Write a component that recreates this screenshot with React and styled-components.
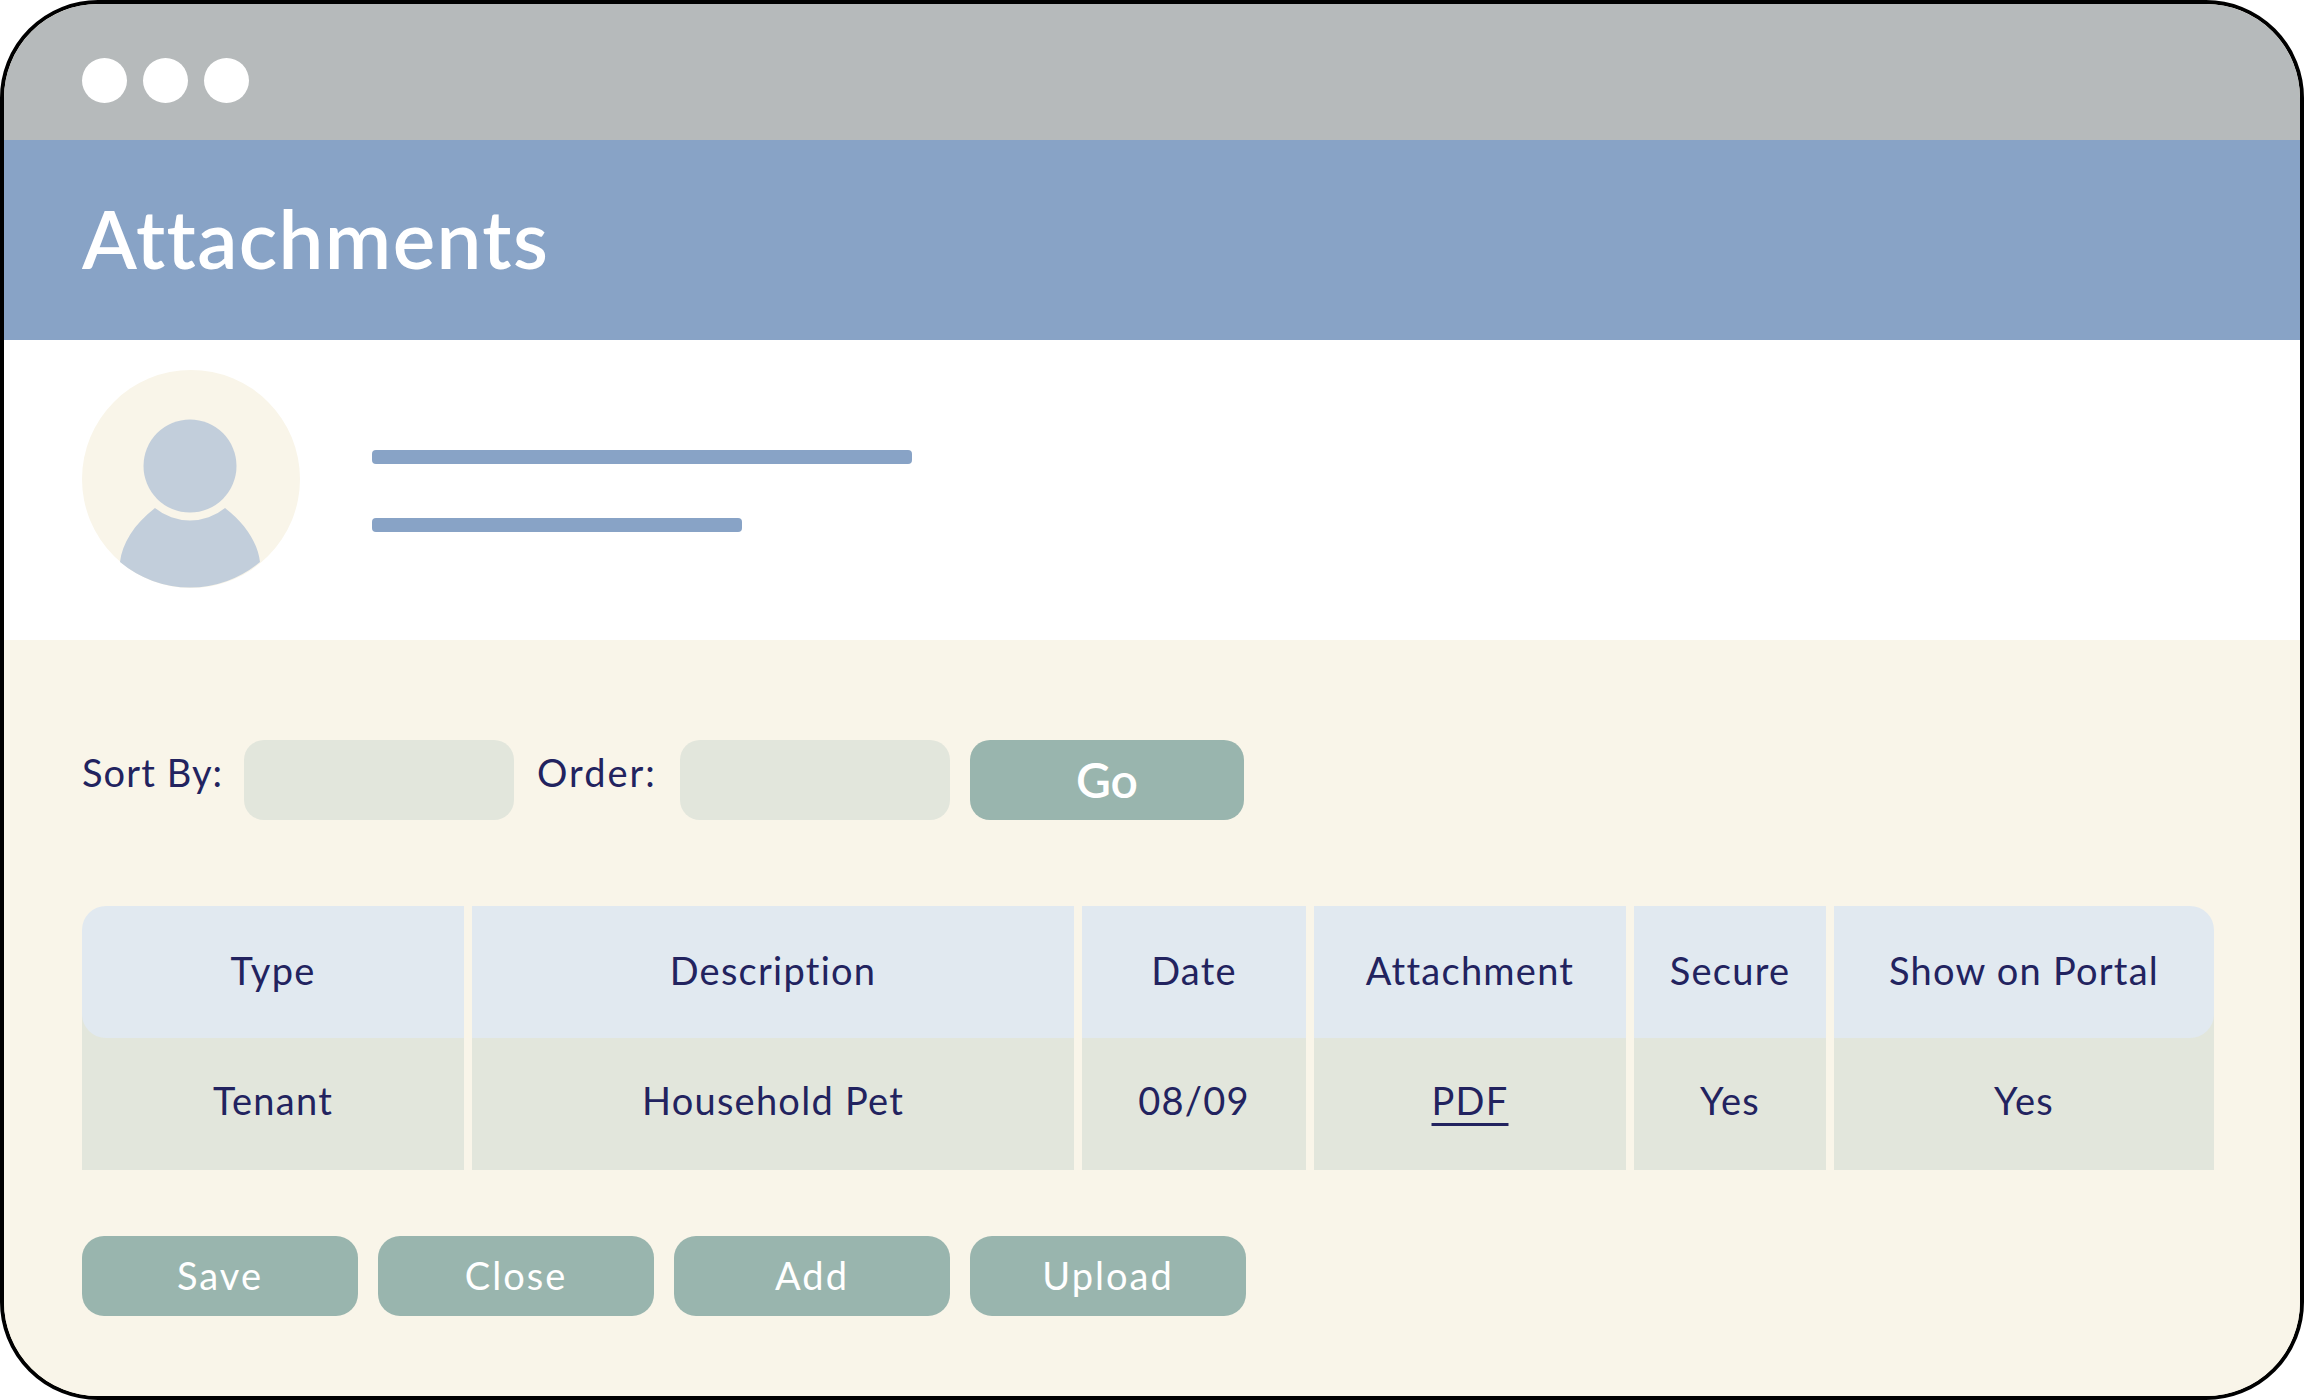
import React from 'react';
import styled, { createGlobalStyle } from 'styled-components';

const GlobalStyle = createGlobalStyle`
    html, body {
        margin: 0;
        padding: 0;
        background: #fff;
    }
    body {
        font-family: Lato, "Liberation Sans", sans-serif;
    }
`;

const columns = [
    { title: 'Type', value: 'Tenant', width: 382 },
    { title: 'Description', value: 'Household Pet', width: 602 },
    { title: 'Date', value: '08/09', width: 224 },
    { title: 'Attachment', value: 'PDF', width: 312, link: true },
    { title: 'Secure', value: 'Yes', width: 192 },
    { title: 'Show on Portal', value: 'Yes', width: 380 },
];

const App = () => {
    return (
        <>
            <GlobalStyle />
            <Frame>
                <TitleBar>
                    <Dot />
                    <Dot />
                    <Dot />
                </TitleBar>
                <Header>Attachments</Header>
                <Profile>
                    <Avatar viewBox="0 0 218 218">
                        <circle cx="109" cy="109" r="109" fill="#f9f5e9" />
                        <circle cx="108" cy="96" r="46.5" fill="#c2cedb" />
                        <path
                            d="M73 138 C52 154 40 174 38 192 A109 109 0 0 0 178 192 C176 174 164 154 143 138 A55 55 0 0 1 73 138 Z"
                            fill="#c2cedb"
                        />
                    </Avatar>
                    <ProfileLines>
                        <ProfileLine $width={540} />
                        <ProfileLine $width={370} />
                    </ProfileLines>
                </Profile>
                <Content>
                    <SortRow>
                        <SortLabel $width={162} $spacing={1.1}>Sort By:</SortLabel>
                        <SelectBox />
                        <SortLabel $width={143} $left={23} $spacing={2}>Order:</SortLabel>
                        <SelectBox />
                        <GoButton>Go</GoButton>
                    </SortRow>
                    <Table>
                        {columns.map((col, index) => (
                            <Column key={col.title} $width={col.width}>
                                <HeadCell $first={index === 0} $last={index === columns.length - 1}>
                                    {col.title}
                                </HeadCell>
                                <BodyCell>
                                    {col.link ? <PdfLink>{col.value}</PdfLink> : col.value}
                                </BodyCell>
                            </Column>
                        ))}
                    </Table>
                    <ButtonRow>
                        {['Save', 'Close', 'Add', 'Upload'].map((label) => (
                            <ActionButton key={label}>{label}</ActionButton>
                        ))}
                    </ButtonRow>
                </Content>
            </Frame>
        </>
    );
};

export default App;

const Frame = styled.div`
    width: 2304px;
    height: 1400px;
    box-sizing: border-box;
    border: 4px solid #000;
    border-radius: 98px;
    overflow: hidden;
    display: flex;
    flex-direction: column;
    background: #f9f5e9;
`;

const TitleBar = styled.div`
    height: 136px;
    background: #b6babb;
    display: flex;
    align-items: flex-start;
    gap: 16px;
    padding: 54px 0 0 78px;
    box-sizing: border-box;
`;

const Dot = styled.div`
    width: 45px;
    height: 45px;
    border-radius: 50%;
    background: #fff;
`;

const Header = styled.div`
    height: 200px;
    background: #88a3c6;
    color: #fff;
    font-size: 80px;
    font-weight: 600;
    letter-spacing: 1.4px;
    line-height: 196px;
    padding-left: 78px;
    box-sizing: border-box;
`;

const Profile = styled.div`
    height: 300px;
    background: #fff;
    display: flex;
    align-items: flex-start;
    box-sizing: border-box;
    padding: 30px 0 0 78px;
`;

const Avatar = styled.svg`
    width: 218px;
    height: 218px;
    flex-shrink: 0;
`;

const ProfileLines = styled.div`
    display: flex;
    flex-direction: column;
    gap: 54px;
    margin: 80px 0 0 72px;
`;

const ProfileLine = styled.div`
    width: ${(props) => props.$width}px;
    height: 14px;
    border-radius: 4px;
    background: #88a3c6;
`;

const Content = styled.div`
    flex: 1;
    background: #f9f5e9;
    padding: 100px 0 0 78px;
    box-sizing: border-box;
    color: #22235f;
`;

const SortRow = styled.div`
    display: flex;
    align-items: center;
    height: 80px;
`;

const SortLabel = styled.div`
    width: ${(props) => props.$width}px;
    margin-left: ${(props) => props.$left || 0}px;
    font-size: 38px;
    letter-spacing: ${(props) => props.$spacing}px;
    padding-bottom: 16px;
    box-sizing: border-box;
`;

const SelectBox = styled.div`
    width: 270px;
    height: 80px;
    border-radius: 20px;
    background: #e2e6dc;
`;

const GoButton = styled.div`
    width: 274px;
    height: 80px;
    margin-left: 20px;
    border-radius: 20px;
    background: #99b5ae;
    color: #fff;
    font-size: 48px;
    font-weight: 600;
    padding-bottom: 2px;
    box-sizing: border-box;
    display: flex;
    align-items: center;
    justify-content: center;
`;

const Table = styled.div`
    display: flex;
    gap: 8px;
    margin-top: 86px;
`;

const Column = styled.div`
    width: ${(props) => props.$width}px;
    /* body colour runs up behind the header so it shows in the rounded corners */
    background: linear-gradient(to bottom, transparent 60px, #e2e6dc 60px);
    text-align: center;
    font-size: 38px;
    letter-spacing: 1.25px;
`;

const HeadCell = styled.div`
    height: 132px;
    line-height: 128px;
    background: #e1e9f0;
    border-radius: ${(props) =>
        props.$first ? '24px 0 0 24px' : props.$last ? '0 24px 24px 0' : '0'};
`;

const BodyCell = styled.div`
    height: 132px;
    line-height: 124px;
`;

const PdfLink = styled.span`
    text-decoration: underline;
    text-decoration-thickness: 3px;
    text-underline-offset: 8px;
`;

const ButtonRow = styled.div`
    display: flex;
    gap: 20px;
    margin-top: 66px;
`;

const ActionButton = styled.div`
    width: 276px;
    height: 80px;
    border-radius: 22px;
    background: #99b5ae;
    color: #fff;
    font-size: 38px;
    letter-spacing: 2px;
    padding-bottom: 3px;
    box-sizing: border-box;
    display: flex;
    align-items: center;
    justify-content: center;
`;
